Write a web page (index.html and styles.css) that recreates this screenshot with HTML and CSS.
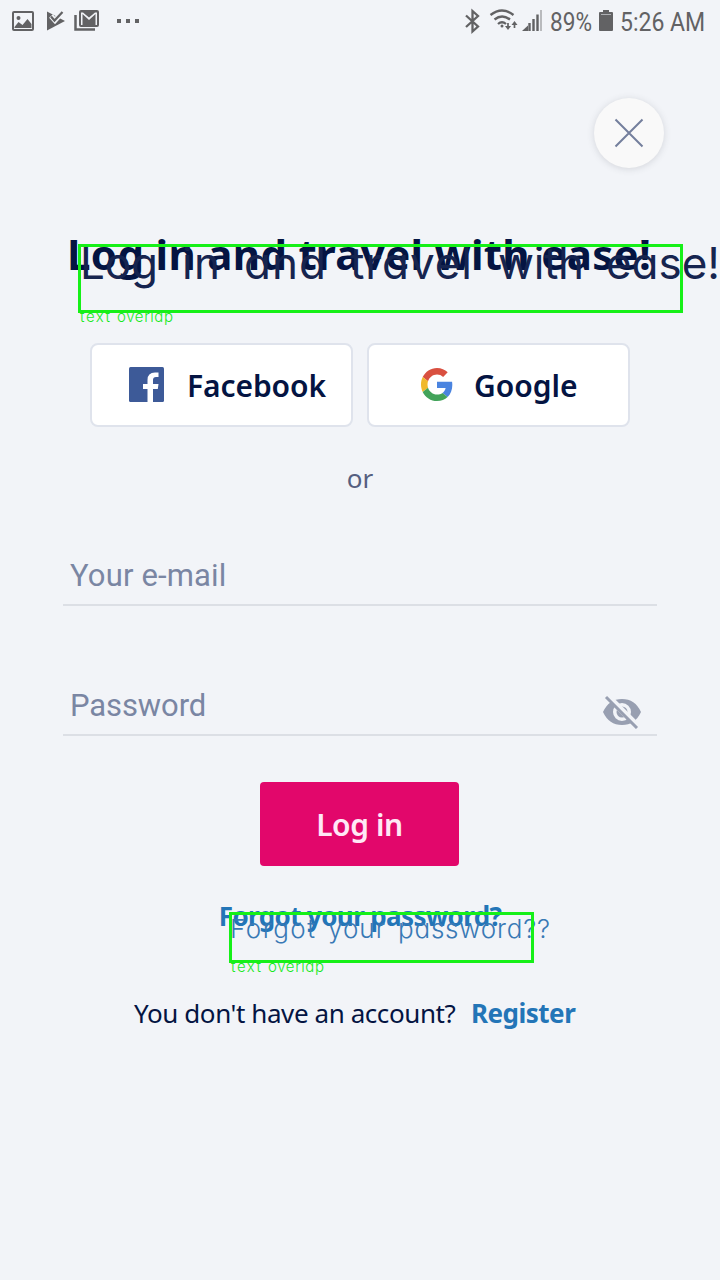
FILE: index.html
```html
<!DOCTYPE html>
<html lang="en">
<head>
<meta charset="utf-8">
<title>Log in</title>
<link rel="stylesheet" href="styles.css">
</head>
<body>
<main class="screen">
  <header class="status">
    <svg class="status-left" width="150" height="44" viewBox="0 0 150 44" fill="#626264">
      <path fill-rule="evenodd" d="M14 11h18q2 0 2 2v16q0 2-2 2H14q-2 0-2-2V13q0-2 2-2zM14 13v16h18v-16zM14.500 27l4-5 4 3 5-6 4 5v4h-17zM16.500 18a2 2 0 1 0 4 0a2 2 0 1 0-4 0z"/>
      <path d="M47 11.500l18 9.500-18 9.500z"/>
      <path d="M51 16l4 4.500 8-9" fill="none" stroke="#f2f4f8" stroke-width="5"/>
      <path d="M51 16.500l3.500 4 8-8.500" fill="none" stroke="#626264" stroke-width="2.200"/>
      <path d="M75.500 15v14.500H95" fill="none" stroke="#626264" stroke-width="2.500"/>
      <path fill-rule="evenodd" d="M81 10h16q2 0 2 2v13q0 2-2 2H81q-2 0-2-2V12q0-2 2-2zM81 12.500V25h1.500V14l6.500 6 6.500-6v11H97V12.500h-2l-6 5-6-5z"/>
      <path d="M117 19h4v4h-4zM126 19h4v4h-4zM135 19h4v4h-4z"/>
    </svg>
    <div class="status-right">
      <svg width="82" height="44" viewBox="462 0 82 44" fill="none" stroke="#626264" stroke-width="2.300">
        <path d="M466 15.500l12 11-5.500 5V11l5.500 5-12 11"/>
        <path d="M490.500 15q11.500-9 23 0M494.500 19.500q7.500-6 15.500 0M498 24q4-3.500 8 0"/>
        <circle cx="502" cy="26" r="1.500" fill="#626264" stroke="none"/>
        <path d="M508 23v5M514.500 28v-4" stroke-width="1.700"/>
        <path d="M505 26h6l-3 4zM511.500 25h6l-3-4z" fill="#626264" stroke="none"/>
        <path d="M522 31l6-5.500V31z" fill="#626264" stroke="none"/>
        <path d="M529.500 31v-8M533.500 31v-12M537.500 31v-16.500" stroke-width="2.400"/>
        <path d="M541 31V10" stroke="#b9babd" stroke-width="2"/>
      </svg>
      <span class="battery-text">89%</span>
      <svg class="battery" width="14" height="22" viewBox="0 0 14 22"><path d="M4 0h6v2h3q1 0 1 1v17q0 1-1 1H1q-1 0-1-1V3q0-1 1-1h3z" fill="#626264"/><path d="M2 4.500h10" stroke="#aeb0b4"/></svg>
      <span class="time">5:26 AM</span>
    </div>
  </header>

  <button class="close" aria-label="Close">
    <svg width="30" height="30" viewBox="0 0 30 30"><path d="M1.500 1.500l27 27M28.500 1.500l-27 27" stroke="#747f9d" stroke-width="2"/></svg>
  </button>

  <h1 class="title">Log in and travel with ease!</h1>

  <div class="social">
    <button class="provider facebook">
      <svg width="35" height="35" viewBox="0 0 35 35"><rect width="35" height="35" rx="1.500" fill="#3d5a98"/><path d="M18.500 35V22h-4.500v-5h4.500v-4q0-7.500 7.500-7.500h3.500V10H27q-3 0-3 3v4h5.500l-.700 5H24v13z" fill="#fff"/></svg>
      <span>Facebook</span>
    </button>
    <button class="provider google">
      <svg width="32" height="33" viewBox="0 0 48 48" preserveAspectRatio="none"><path fill="#d95040" d="M24 9.500c3.540 0 6.710 1.220 9.210 3.600l6.850-6.850C35.900 2.380 30.470 0 24 0 14.620 0 6.510 5.380 2.560 13.220l7.980 6.190C12.430 13.720 17.740 9.500 24 9.500z"/><path fill="#4a84e0" d="M46.980 24.550c0-1.570-.150-3.090-.380-4.550H24v9.020h12.940c-.580 2.960-2.260 5.480-4.780 7.180l7.730 6c4.510-4.180 7.090-10.360 7.090-17.650z"/><path fill="#f0b92c" d="M10.530 28.590c-.480-1.450-.760-2.990-.760-4.590s.270-3.140.760-4.590l-7.980-6.190C.920 16.460 0 20.120 0 24s.920 7.540 2.560 10.780z"/><path fill="#42a35a" d="M24 48c6.480 0 11.930-2.130 15.890-5.810l-7.730-6c-2.150 1.450-4.920 2.300-8.160 2.300-6.260 0-11.570-4.220-13.470-9.910l-7.980 6.190C6.510 42.620 14.620 48 24 48z"/></svg>
      <span>Google</span>
    </button>
  </div>

  <div class="or">or</div>

  <label class="field email"><span>Your e-mail</span></label>
  <label class="field password"><span>Password</span>
    <svg width="40" height="34" viewBox="0 0 40 34"><path fill-rule="evenodd" fill="#989fb1" d="M1 17Q7 4 20 4t19 13Q33 30 20 30T1 17zM11 17a9 9 0 1 0 18 0a9 9 0 1 0-18 0z"/><circle cx="20" cy="17" r="5.500" fill="#989fb1"/><path d="M16 14l7 7" stroke="#f2f4f8" stroke-width="3"/><path d="M6 0l31 31" stroke="#f2f4f8" stroke-width="4"/><path d="M4 2l31 31" stroke="#989fb1" stroke-width="3"/></svg>
  </label>

  <button class="login">Log in</button>
  <a class="forgot">Forgot your password?</a>
  <div class="signup"><span class="question">You don't have an account?</span><a class="register">Register</a></div>

  <svg class="annotations" width="720" height="1280" viewBox="0 0 720 1280">
    <g class="note-title">
      <text x="80" y="279" textLength="78">Log</text>
      <text x="182" y="279" textLength="38">in</text>
      <text x="244" y="279" textLength="82">and</text>
      <text x="350" y="279" textLength="122">travel</text>
      <text x="498" y="279" textLength="86">with</text>
      <text x="606" y="279" textLength="114">ease!</text>
    </g>
    <g class="note-forgot">
      <text x="230" y="938" textLength="85">Forgot</text>
      <text x="328" y="938" textLength="57">your</text>
      <text x="398" y="938" textLength="152">password??</text>
    </g>
    <g class="note-label">
      <text x="80" y="322" textLength="30">text</text>
      <text x="117" y="322" textLength="56">overlap</text>
      <text x="231" y="972" textLength="30">text</text>
      <text x="268" y="972" textLength="56">overlap</text>
    </g>
    <g class="note-box">
      <rect x="79.500" y="245.500" width="602" height="66"/>
      <rect x="230.500" y="913.500" width="302" height="48"/>
    </g>
  </svg>
</main>
</body>
</html>
```
FILE: styles.css
```css
* { box-sizing: border-box; }
body { margin: 0; background: #f2f4f8; font-family: "Noto Sans", sans-serif; }
button { font: inherit; padding: 0; border: 0; }
svg { display: block; flex: none; }
.screen { position: relative; display: flex; flex-direction: column; width: 720px; height: 1280px; overflow: hidden; color: #041442; }
.status { display: flex; justify-content: space-between; height: 44px; font: 26px/44px Roboto, sans-serif; color: #626264; }
.status-right { display: flex; align-items: center; width: 258px; white-space: nowrap; }
.battery-text { width: 43px; margin: 0 6px; transform: scaleX(.87); transform-origin: left; }
.battery { margin-bottom: 2px; }
.time { margin-left: 7px; transform: scaleX(.885); transform-origin: left; }
.close { display: grid; place-items: center; width: 70px; height: 70px; margin: 54px 56px 0 auto; border-radius: 50%; background: #f9f9f9; box-shadow: 0 1px 7px rgba(60, 65, 80, .17); }
.title { margin: 53px 0 0 67px; height: 66px; font-size: 42px; line-height: 66px; font-weight: 700; letter-spacing: .33px; white-space: nowrap; }
.social { display: flex; gap: 14px; margin: 56px 90px 0; }
.provider { display: flex; align-items: center; width: 263px; height: 84px; border: 2px solid #dfe3ec; border-radius: 8px; background: #fff; font-size: 30px; font-weight: 600; color: #041442; }
.facebook { padding-left: 37px; gap: 23px; letter-spacing: -.1px; }
.provider svg { margin-bottom: 2px; }
.google { padding-left: 52px; gap: 21px; }
.or { margin-top: 31px; height: 40px; line-height: 40px; text-align: center; font-size: 26px; color: #565f80; }
.field { display: flex; justify-content: space-between; width: 594px; height: 62px; margin-left: 63px; padding: 0 15px 0 7px; border-bottom: 2px solid #dcdfe5; font: 31px/64px Roboto, sans-serif; color: #7a86a3; }
.email { margin-top: 46px; letter-spacing: .16px; }
.password { margin-top: 68px; letter-spacing: -.1px; }
.password svg { margin-top: 21px; }
.login { width: 199px; height: 84px; margin: 46px 0 0 260px; border-radius: 4px; background: #e2076b; color: #ffe8f6; font-size: 30px; font-weight: 600; letter-spacing: -.4px; }
.forgot { height: 40px; margin-top: 30px; text-align: center; font-size: 26px; line-height: 40px; font-weight: 700; letter-spacing: -.62px; color: #2375b7; }
.signup { display: flex; height: 40px; margin: 57px 0 0 134px; font-size: 26px; line-height: 40px; white-space: nowrap; }
.question { width: 337px; letter-spacing: -.42px; }
.register { font-weight: 700; letter-spacing: -.5px; color: #2375b7; }
.annotations { position: absolute; inset: 0; font-family: Inter, sans-serif; font-feature-settings: "cv11"; }
.note-title { font-size: 44px; font-weight: 400; fill: #16244f; }
.note-forgot { font-size: 26px; font-weight: 300; fill: #3979b5; }
.note-label { font-size: 15px; font-weight: 300; fill: #16e81d; }
.note-box { fill: none; stroke: #16f018; stroke-width: 3; }
```
